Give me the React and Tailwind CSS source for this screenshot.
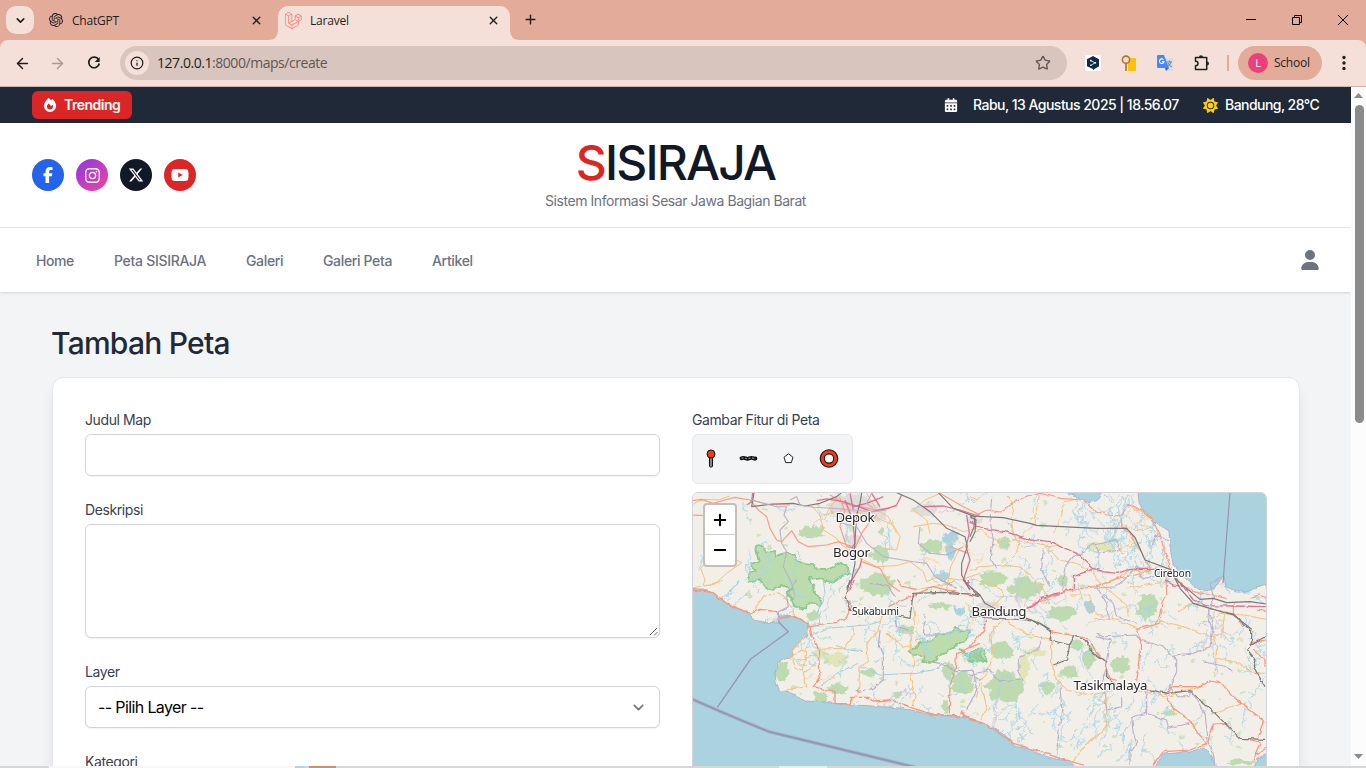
import React from "react";
import { FaFacebookF, FaInstagram, FaXTwitter, FaYoutube, FaFire, FaCalendarDays, FaSun, FaUser, FaLaravel } from "react-icons/fa6";
import { SiOpenai } from "react-icons/si";
import { ArrowLeft, ArrowRight, ChevronDown, X, Plus, Star, Info } from "lucide-react";

function TabStrip() {
  return (
    <div className="flex h-10 shrink-0 bg-[#e3ab9a] text-[12px] text-[#1f1f1f]">
      <div className="ml-1.5 mt-1.5 flex size-7 items-center justify-center rounded-[10px] bg-[#f5e0d9]">
        <ChevronDown size={13} strokeWidth={3} />
      </div>
      <div className="ml-[15px] flex h-10 w-[229px] items-center">
        <SiOpenai size={14} />
        <span className="ml-[9px] mt-px tracking-[-0.2px]">ChatGPT</span>
        <X size={13} strokeWidth={2.6} className="ml-auto mr-[15px]" />
      </div>
      <svg className="mt-[30px] h-2.5 w-2.5 -ml-[10px]" viewBox="0 0 10 10"><path d="M10 0V10H0Q10 10 10 0" fill="#f5e0d9" /></svg>
      <div className="mt-1.5 flex h-[34px] w-[232px] items-center rounded-t-[10px] bg-[#f5e0d9] pb-1.5">
        <FaLaravel size={17} color="#ff5a4d" className="ml-[7px]" />
        <span className="ml-[8px] mt-px tracking-[-0.2px]">Laravel</span>
        <X size={13} strokeWidth={2.6} className="ml-auto mr-[10px]" />
      </div>
      <svg className="mt-[30px] h-2.5 w-2.5" viewBox="0 0 10 10"><path d="M0 0V10H10Q0 10 0 0" fill="#f5e0d9" /></svg>
      <Plus size={15} strokeWidth={2.2} className="ml-[3px] mt-[12px]" />
      <div className="ml-auto flex items-center text-black">
        <svg width="110" height="14" viewBox="0 0 110 14" fill="none" stroke="currentColor" className="mr-[14px]">
          <path d="M4 6.5h10M50.5 4.5h7v7h-7zM52.500 4.500v-2h7v7h-2" />
          <path d="M96 2l10 10M106 2L96 12" />
        </svg>
      </div>
    </div>
  );
}

function Toolbar() {
  return (
    <div className="shrink-0 bg-[#e3ab9a]">
      <div className="flex h-[46px] items-center rounded-t-[8px] bg-[#f5e0d9] text-[#1f1f1f]">
        <ArrowLeft size={17} strokeWidth={2.1} className="ml-[14px]" />
        <ArrowRight size={17} strokeWidth={2.1} className="ml-[18px] text-[#a79a96]" />
        <svg width="16" height="16" viewBox="0 0 16 16" className="ml-[20px]" fill="none" stroke="currentColor" strokeWidth="1.7">
          <path d="M12.600 4.600A5.300 5.300 0 1 0 13.300 8.500" />
          <path d="M13.700 2v5h-5z" fill="currentColor" stroke="none" />
        </svg>
        <div className="ml-[18px] flex h-[34px] w-[947px] items-center rounded-full bg-[#d8c5be]">
          <div className="ml-[5px] flex size-6 items-center justify-center rounded-full bg-[#f5e0d9]"><Info size={14} strokeWidth={2.1} /></div>
          <span className="mb-px ml-[8px] text-[14px] tracking-[-0.45px] text-[#5e5653]"><span className="text-[#1f1f1f]">127.0.0.1</span>:8000/maps/create</span>
          <Star size={16} strokeWidth={2} className="ml-auto mr-4 text-[#5e5653]" />
        </div>
        <svg width="16" height="16" viewBox="0 0 16 16" className="ml-[18px]">
          <rect width="16" height="16" rx="1" fill="#fff" />
          <path d="M8 1l6 3.300v7L9.500 14 8 15.300V14L2 11.300v-7z" fill="#0f2b46" />
          <path d="M5.500 5.500l4.500 2.300-4 2.500" stroke="#fff" fill="none" strokeWidth=".8" /><circle cx="10.300" cy="7.800" r=".9" fill="#fff" /><circle cx="5.800" cy="5.600" r=".9" fill="#fff" /><circle cx="5.800" cy="10.300" r=".8" fill="#fff" />
        </svg>
        <svg width="16" height="17" viewBox="0 0 16 17" className="ml-[20px]">
          <rect x="7" y="3" width="8" height="13" rx="1" fill="#fbc10d" />
          <path d="M5 8v8" stroke="#a96b16" strokeWidth="1.500" /><circle cx="5" cy="4.700" r="3.600" fill="#f5e0d9" stroke="#b87316" strokeWidth="1.600" />
        </svg>
        <svg width="17" height="16" viewBox="0 0 17 16" className="ml-[20px]">
          <path d="M8 3h7q1 0 1 1v11q0 1-1 1H9z" fill="#d9dde2" />
          <path d="M1 0h6l5 13H1q-1 0-1-1V1q0-1 1-1z" fill="#4587f4" /><path d="M8 13h4l-3 3z" fill="#3367d6" />
          <path d="M6.400 4.600A2.300 2.300 0 1 0 7 6.600H4.800" stroke="#fff" strokeWidth="1.100" fill="none" />
          <path d="M10 7h5M12.500 5.500V7M14 7q-1 4-4 5M11 8q1 3 4 4" stroke="#6f8495" fill="none" />
        </svg>
        <svg width="18" height="18" viewBox="0 0 18 18" className="ml-[19px]" fill="none" stroke="currentColor" strokeWidth="1.500">
          <path d="M2.500 3.500h11.200v11.900H2.500v-3.700q2.500 0 2.500-2.200T2.500 7.300z" strokeLinejoin="round" />
          <path d="M6 3.200a2 2 0 0 1 4 0zM14 7.500a2 2 0 0 1 0 4z" fill="currentColor" stroke="none" />
        </svg>
        <div className="ml-[16px] h-4 w-0.5 bg-[#e3ab9a]" />
        <div className="ml-[9px] flex h-[34px] w-[84px] items-center rounded-full bg-[#e3ab9a]">
          <div className="ml-2.5 flex size-5 items-center justify-center rounded-full bg-[#ec407a] text-[11px] text-white">L</div>
          <span className="ml-[6px] text-[12px] tracking-[-0.25px]">School</span>
        </div>
        <svg width="4" height="16" viewBox="0 0 4 16" className="ml-[20px]" fill="currentColor"><circle cx="2" cy="2.500" r="1.700" /><circle cx="2" cy="8" r="1.700" /><circle cx="2" cy="13.500" r="1.700" /></svg>
      </div>
      <div className="h-px bg-[#cbb4ac]" />
    </div>
  );
}

function SiteHeader() {
  return (
    <>
      <div className="flex h-9 items-center bg-[#1f2937] pl-8 pr-8 text-sm font-medium text-white">
        <div className="flex h-7 w-[100px] items-center rounded-md bg-[#dc2626] pl-[11px] font-semibold">
          <FaFire size={14} /><span className="ml-[7px] tracking-[-0.5px]">Trending</span>
        </div>
        <FaCalendarDays size={14} className="ml-auto" />
        <span className="ml-[15px] w-[206px] whitespace-nowrap tracking-[-0.52px]">Rabu, 13 Agustus 2025 | 18.56.07</span>
        <FaSun size={15} className="ml-6 text-[#facc15]" />
        <span className="ml-[7px] w-[94px] whitespace-nowrap tracking-[-0.55px]">Bandung, 28°C</span>
      </div>
      <header className="grid h-[105px] grid-cols-[1fr_auto_1fr] items-center border-b border-[#e5e7eb] bg-white px-8">
        <div className="flex gap-3 text-white">
          <div className="flex size-8 items-center justify-center rounded-full bg-[#2563eb]"><FaFacebookF size={16} /></div>
          <div className="flex size-8 items-center justify-center rounded-full bg-[linear-gradient(135deg,#9333ea,#ec4899)]"><FaInstagram size={17} /></div>
          <div className="flex size-8 items-center justify-center rounded-full bg-[#111827]"><FaXTwitter size={16} /></div>
          <div className="flex size-8 items-center justify-center rounded-full bg-[#dc2626]"><FaYoutube size={18} /></div>
        </div>
        <div className="flex flex-col items-center">
          <div className="h-12 text-[48px]/[48px] font-medium tracking-[-1.8px] text-[#111827]"><span className="text-[#dc2626]">S</span>ISIRAJA</div>
          <div className="mt-1 text-sm tracking-[-0.44px] text-[#6b7280]">Sistem Informasi Sesar Jawa Bagian Barat</div>
        </div>
      </header>
      <nav className="relative flex h-16 items-center gap-10 bg-white pl-9 pr-[31px] pt-px text-sm font-medium text-[#6b7280] shadow-sm">
        <span className="w-[38px] tracking-[-0.4px]">Home</span>
        <span className="w-[92px] whitespace-nowrap tracking-[-0.3px]">Peta SISIRAJA</span>
        <span className="w-[37px] tracking-[-0.35px]">Galeri</span>
        <span className="w-[69px] whitespace-nowrap tracking-[-0.35px]">Galeri Peta</span>
        <span className="tracking-[-0.35px]">Artikel</span>
        <FaUser size={20} className="mb-0.5 ml-auto" />
      </nav>
    </>
  );
}

function Label({ children }) {
  return <div className="mb-1 h-5 text-sm/5 tracking-[-0.4px] text-[#374151]">{children}</div>;
}

function DrawTools() {
  return (
    <div className="flex h-[50px] w-[161px] items-center rounded-md border border-[#e5e7eb] bg-[#f3f4f6]">
      <svg width="159" height="48" viewBox="693 435 159 48">
        <rect x="709.500" y="456" width="3" height="11" rx="1" fill="#888" stroke="#111" />
        <circle cx="711" cy="454" r="4" fill="#f23a14" stroke="#111" strokeWidth="1" />
        <path d="M741.500 458.300q2-1 4 0t4 0 4 0 2 0" stroke="#111" strokeWidth="3.800" fill="none" strokeLinecap="round" />
        <path d="M741.500 458.300q2-1 4 0t4 0 4 0 2 0" stroke="#8a8a8a" strokeWidth="1.200" fill="none" strokeDasharray="2 1.500" />
        <path d="M788.500 453.700l4.500 3.600-1.700 5.300h-5.600l-1.700-5.300z" fill="#fff" stroke="#222" />
        <circle cx="829" cy="458.500" r="6.700" stroke="#151515" strokeWidth="5.200" fill="#fff" />
        <circle cx="829" cy="458.500" r="6.700" stroke="#f23a14" strokeWidth="3" fill="none" />
      </svg>
    </div>
  );
}

function makeRandom(seed) {
  let s = seed;
  return () => ((s = (s * 16807) % 2147483647) / 2147483647);
}

function wander(rnd, x, y, angle, steps, len) {
  let d = `M${x.toFixed(1)} ${y.toFixed(1)}`;
  let a = angle;
  for (let i = 0; i < steps; i++) {
    a += (rnd() - 0.5) * 1.1;
    x += Math.cos(a) * len;
    y += Math.sin(a) * len;
    d += `L${x.toFixed(1)} ${y.toFixed(1)}`;
    if (rnd() < 0.2) {
      const b = a + (rnd() < 0.5 ? 1 : -1);
      d += `l${(Math.cos(b) * len * 1.6).toFixed(1)} ${(Math.sin(b) * len * 1.6).toFixed(1)}M${x.toFixed(1)} ${y.toFixed(1)}`;
    }
  }
  return d;
}

const rnd = makeRandom(4721);
const streams = Array.from({ length: 230 }, () =>
  wander(rnd, 692 + rnd() * 575, 492 + rnd() * 274, Math.PI * (0.25 + rnd() * 0.5) * (rnd() < 0.5 ? -1 : 1), 4 + Math.floor(rnd() * 8), 3)
).join("");
const deltaStreams = Array.from({ length: 80 }, () =>
  wander(rnd, 1068 + rnd() * 100, 492 + rnd() * 75, 1.2 + rnd(), 3 + Math.floor(rnd() * 5), 2.6)
).join("");
const southStreams = Array.from({ length: 42 }, () =>
  wander(rnd, 985 + rnd() * 150, 695 + rnd() * 50, 1.5 + rnd() * 0.8, 4 + Math.floor(rnd() * 5), 3)
).join("");
const minorRoads = Array.from({ length: 14 }, () =>
  wander(rnd, 692 + rnd() * 575, 492 + rnd() * 220, rnd() * 6.3, 6 + Math.floor(rnd() * 9), 4)
).join("");
const minorBorders = Array.from({ length: 12 }, () =>
  wander(rnd, 720 + rnd() * 530, 500 + rnd() * 240, rnd() * 6.3, 7 + Math.floor(rnd() * 9), 3.5)
).join("");

const woods = [
  [877, 585, 18, 13], [932, 547, 11, 8], [812, 532, 14, 7], [993, 579, 16, 9], [1025, 588, 17, 12], [880, 554, 10, 9],
  [1147, 607, 11, 14], [1063, 581, 6, 6], [1061, 613, 16, 8], [782, 671, 7, 12], [1004, 686, 19, 18], [1002, 650, 12, 9],
  [1120, 665, 10, 9], [1077, 645, 7, 6], [1089, 658, 7, 13], [1070, 673, 10, 7], [1048, 687, 7, 8], [963, 683, 12, 13],
  [948, 670, 8, 9], [838, 690, 11, 7], [821, 697, 9, 6], [1169, 713, 8, 3], [940, 606, 11, 4],
  [812, 616, 6, 5], [1241, 762, 14, 3], [869, 672, 8, 4], [905, 630, 9, 5], [945, 707, 4, 8], [1004, 542, 7, 7], [881, 531, 4, 4], [896, 695, 6, 4],
];
function blob([cx, cy, rx, ry]) {
  let d = "";
  for (let i = 0; i < 26; i++) {
    const a = (i / 26) * Math.PI * 2;
    const k = 0.7 + rnd() * 0.42;
    d += `${i ? "L" : "M"}${(cx + Math.cos(a) * rx * k).toFixed(1)} ${(cy + Math.sin(a) * ry * k).toFixed(1)}`;
  }
  return d + "Z";
}
const woodPath = woods.map(blob).join("");
const scatterPath = Array.from({ length: 170 }, () => blob([700 + rnd() * 560, 500 + rnd() * 250, 1 + rnd() * 2.5, 1 + rnd() * 1.6])).join("");
const scrubPath = [[836, 659, 15, 7], [1024, 668, 6, 14], [1102, 546, 14, 6], [1035, 652, 14, 5], [820, 654, 8, 4], [1152, 600, 6, 4]].map(blob).join("");
const urbanPath = [[850, 503, 24, 11], [870, 513, 18, 10], [852, 540, 9, 8], [925, 510, 14, 7], [990, 608, 17, 7], [1170, 574, 7, 5], [975, 520, 9, 4], [1112, 687, 9, 4]].map(blob).join("");

const NW = "translate(680 400) scale(.33333)";
const NE = "translate(970 480) scale(.33333)";
const SW = "translate(680 580) scale(.33333)";
const SE = "translate(970 610) scale(.33333)";
const WEST = "translate(692 490) scale(.33333)";

function Places() {
  return (
    <g fontFamily="Noto Sans" fill="#262626" stroke="#fff" strokeOpacity=".85" strokeWidth="2.400" paintOrder="stroke" textAnchor="middle" strokeLinejoin="round">
      <text x="855" y="522" fontSize="13.300" textLength="39">Depok</text>
      <text x="851.500" y="557" fontSize="13.300" textLength="37">Bogor</text>
      <text x="875.500" y="615" fontSize="10.700" textLength="47">Sukabumi</text>
      <text x="999" y="616" fontSize="13.300" textLength="55">Bandung</text>
      <text x="1172.500" y="577" fontSize="10.300" textLength="37">Cirebon</text>
      <text x="1110.500" y="690" fontSize="13.300" textLength="74">Tasikmalaya</text>
    </g>
  );
}

function MapView() {
  return (
    <div className="relative h-[400px] overflow-hidden rounded-md border border-[#d1d5db]">
      <svg width="573" height="275" viewBox="693 493 573 275" fill="none" strokeLinejoin="round">
        <defs>
          <filter id="wobble" filterUnits="userSpaceOnUse" x="680" y="480" width="600" height="300" colorInterpolationFilters="sRGB">
            <feTurbulence type="fractalNoise" baseFrequency=".11" numOctaves="3" seed="8" />
            <feDisplacementMap in="SourceGraphic" scale="7" xChannelSelector="R" yChannelSelector="G" />
          </filter>
          <filter id="wobbleSoft" filterUnits="userSpaceOnUse" x="680" y="480" width="600" height="300" colorInterpolationFilters="sRGB">
            <feTurbulence type="fractalNoise" baseFrequency=".14" numOctaves="2" seed="3" />
            <feDisplacementMap in="SourceGraphic" scale="4" xChannelSelector="R" yChannelSelector="G" />
          </filter>
        </defs>
        <rect x="692" y="492" width="575" height="276" fill="#f2efe9" />
        <g filter="url(#wobble)">
          <path d={urbanPath} fill="#dfdcd9" />
          <path d={scrubPath} fill="#e1e5b8" />
          <path d={scatterPath} fill="#cfe3bd" />
          <path d={woodPath} fill="#bedab0" />
          <g fill="#bcdcae" stroke="#8bc78f" strokeWidth="5">
            <path transform={WEST} d="M190 170L205 168 220 180 248 183 250 200 275 190 305 192 310 210 338 222 365 225 375 238 400 240 430 222 465 225 468 250 440 262 425 280 400 272 380 262 350 268 365 290 370 315 388 325 385 345 350 340 340 355 310 352 300 330 285 315 295 298 270 285 240 300 215 285 205 270 170 278 165 255 190 240 172 225 200 212Z" />
            <path transform={WEST} d="M655 485L690 455 720 450 740 430 775 430 790 410 800 425 832 420 830 445 810 455 775 475 760 490 740 495 720 515 690 520 695 495 665 495ZM795 480L830 490 880 480 880 510 840 505Z" />
            <path transform={SE} d="M0 120L38 118 28 135 42 150 20 160 0 155Z" fill="#9ccf9c" />
          </g>
          <g fill="#aad3df">
            <path d="M942 537l8-5 8 3 2 5-7 3 3 9-4 8-5-2-1-14-5-2zM935 575l8-4 8 4-5 7zM968 609l5 2-3 6zM1083 603l9-3 3 11-7 3zM1004 543l5 2-4 6zM953 606l12 2-2 8-8-3z" />
          </g>
          <g stroke="#a9d4e4" strokeWidth=".85"><path d={streams} /><path d={deltaStreams} /><path d={southStreams} /></g>
          <path d={minorRoads} stroke="#f8d2a0" strokeWidth=".8" />
          <path d={minorBorders} stroke="#cbc0d4" strokeWidth=".7" />
        </g>
        <g fill="#aad3df" stroke="#9da5c0" strokeWidth=".7" filter="url(#wobbleSoft)">
          <path d="M680 589L704 590 713 593 727 604 740 609 751 615 754 620 763 622 778 623 781 616 795 617 804 621 808 626 808 635 801 641 795 645 792 651 791 658 783 659 778 662 777 668 775 673 776 682 780 691 787 691 795 695 805 701 824 702 840 704 873 706 900 708 915 711 932 715 949 716 963 717 976 722 985 724 999 731 1011 740 1014 746 1028 749 1042 755 1055 759 1070 761 1085 779H680Z" />
          <path d="M1137 480L1139 503 1146 515 1155 522 1169 531 1170 547 1173 565 1184 577 1195 587 1204 591 1214 589 1219 581 1224 577 1226 587 1236 592 1247 592 1257 587 1276 581V480Z" />
          <path d="M1063 490L1078 498 1090 503 1099 499 1109 480Z" />
          <path d="M1148 779L1163 754 1190 752 1204 747 1212 755 1218 779ZM1252 779L1257 758 1277 751V779Z" />
        </g>

        <g transform={NW} filter="url(#wobbleNW)">
          <g stroke="#f5c27a" strokeWidth="3">
            <path d="M36 315Q55 300 75 298L115 300 150 288M70 555L75 540 62 505 90 470 115 475 150 470 185 488 140 520 105 552 70 558M395 318L420 345 430 390 470 415 485 435 530 470 590 500 650 497 690 485M430 345Q490 325 540 338T640 375L660 410 650 450 610 445M560 280L590 330 625 350 650 400M785 278L735 300 700 330 740 360 750 400M700 380L760 370 800 375 850 395 890 385M690 485L730 515 740 545 775 530 840 540 900 520M800 570L812 500 840 445M480 290L455 315 440 340" />
          </g>
          <g stroke="#fa9d85" strokeWidth="3.600">
            <path d="M36 302L65 298 100 310 135 300 165 292 210 300 235 330 260 350 270 385 290 420 305 425 335 392 355 425 385 440 440 435 475 425 515 440M220 302L260 312 330 315M480 295L495 335 485 350 480 380 500 440 525 445M525 445L545 400 570 365 590 345M545 485L600 505 625 550 660 575M450 285L490 310 590 330 650 318M36 345L80 347M780 280L850 320 900 345M810 440L865 460" />
          </g>
          <g stroke="#df708d" strokeWidth="3.800">
            <path d="M495 300L510 340 520 380 525 430 515 445M410 302L440 297 490 305 535 320 575 335 625 325 650 315 665 285M520 320L560 310 610 290M730 320L790 318 840 330 900 350M860 345L868 400 858 440 870 480 850 540 870 570M545 475L540 500 510 550M218 278L215 305 200 315M510 280L520 330M575 280L600 320" />
          </g>
          <g stroke="#807a7b" strokeWidth="3.500"><path d="M222 278L215 320 280 312 340 310 375 318 420 310 470 290 485 278M545 278L540 310 530 345 523 450 525 490 515 540 500 565M650 278L700 300 750 335 800 385 855 410 862 440 845 490 845 525 870 570M775 278L820 325 885 350 882 380 870 410" /></g>
          <g stroke="#b9afca" strokeWidth="3.200"><path d="M215 300L290 320 320 320 312 345 325 365 300 390 305 430 320 455 310 500 335 550 345 590M330 300L350 290 360 315 400 322 455 325 580 335 620 330M575 280L560 310 580 325M720 380L715 430 750 460 800 465 850 440M470 365L530 380 560 430 610 470 700 485 740 490 765 530 800 550" /></g>
        </g>

        <g filter="url(#wobbleSoft)">
          <g transform={NE} stroke="#f5c27a" strokeWidth="3">
            <path d="M0 50L20 60 50 40M115 48L130 90 125 130 135 180 80 185 30 150 0 160M205 45L195 130 150 175 140 220 105 255 30 260 0 272M135 180L235 200 270 195M105 255L155 262 215 320 230 345 240 375M230 205L270 240 320 250 360 270 390 310 440 350 470 375 475 410M320 58L280 65 275 110 250 160M470 70L500 90 550 110M485 140L500 155 550 140M300 345L360 345 360 390 400 410M470 325L530 315 585 305M400 310L440 298 480 270 540 275M620 395L665 370 700 375M700 430L750 400 820 405 888 418M0 395L60 385 105 345 70 310 0 300" />
          </g>
          <g transform={NE} stroke="#fa9d85" strokeWidth="3.500">
            <path d="M0 115L50 90 90 96 140 60 210 40 270 55 340 60 370 90 410 105 455 108 475 70 530 100 550 125 570 165 585 220 605 270M455 108L455 140 480 155 495 190 525 235 545 275M370 320L405 310 440 295 495 285 545 270M170 385L240 350 310 330 370 320M588 290L590 340 575 370 570 430 520 445M605 280L640 318 670 335 720 345 770 355M790 370L790 400 820 440M840 355L865 345 888 352M860 390L888 395" />
          </g>
          <path transform={NE} d="M0 125L40 145 105 155 170 175 240 185 320 220 370 265 400 275 440 280 480 268 560 268M370 265L310 290 310 325 260 340 215 355 200 375 170 385M585 300L610 315 640 320 670 360 710 377 790 378 888 380M50 420L40 450" stroke="#e0708e" strokeWidth="3.800" />
          <g transform={NE} stroke="#b9afca" strokeWidth="3.200"><path d="M65 50L60 120 70 180 60 235 80 265M370 188L345 215 310 230 285 260 275 330M370 188L385 220 450 210 440 180 370 195M220 205L215 270 240 320M380 320L410 370 415 420M550 200L555 165 595 180M500 260L520 300 585 270M755 290L720 310 730 350 715 420 730 448M500 260L440 320 370 325M400 345L430 370 440 410 500 430" /></g>
        </g>
        <g transform={NE} stroke="#7b7677" strokeWidth="3.500"><path d="M0 108L100 113 180 130 200 136 380 145 470 145 495 172 525 240 600 268 625 305 690 358 730 355 770 368 840 365 888 372M600 268L630 325 670 370 720 385 790 405 845 448M0 320L30 345 45 370 100 400 170 415 210 430 240 448M0 110L18 120 15 155 0 185" /></g>
        <path d="M1230 492L1223 583" stroke="#9a93b0" strokeWidth="1.200" />

        <g filter="url(#wobbleSoft)">
          <g transform={SW} stroke="#f5c27a" strokeWidth="3.200">
            <path d="M36 28L85 15 130 0M215 100L250 50 295 38 320 60 340 90 340 112M383 155L335 215 345 265 370 270 380 215 365 210 325 235M350 240L375 235 410 225M410 208L490 205 520 165 515 140M510 365L535 340 540 260 565 245 560 190 595 150 605 110 655 100M615 160L650 180 665 205 690 200 705 110 700 80M690 200L705 250 690 290 705 350 700 380M300 332L380 320 370 280 410 250M700 30L820 10 825 0M620 160L640 175M890 350L900 310" />
          </g>
          <g transform={SW} stroke="#fa937a" strokeWidth="3.800">
            <path d="M36 30L100 38 140 70 213 100 240 88 290 95 300 115 345 110 380 130 390 140 395 165 415 208 420 290 400 320 465 335 465 370 510 372 515 352 570 352 575 363 635 360 700 385 760 403 840 408 845 390 855 410 900 430M390 140L470 130 500 110 515 80 495 50M650 0L665 18 710 28M625 80L670 60 760 20 840 40 900 48M900 190L830 220 825 270 810 320 808 400" />
          </g>
          <path transform={SW} d="M510 0L495 50 510 90 540 100 640 105 690 115 700 40 790 37 870 42 900 50M850 0L900 50" stroke="#807a7b" strokeWidth="3.600" />
          <path transform={SW} d="M520 0L495 50M868 0V20" stroke="#df708d" strokeWidth="3.600" />
          <g transform={SW} stroke="#b4abca" strokeWidth="3.300"><path d="M350 0L320 50 325 80 295 95 295 125M735 105L730 165 770 165M600 150L595 200 610 225 610 300 580 325 530 335M780 0L830 25M865 280L900 300M645 120L650 140 685 150M720 240L780 250 830 275 880 270 890 330 860 390M570 10L620 15 645 50" /></g>
          <g transform={SW} stroke="#9fcfe0" strokeWidth="3"><path d="M395 165L440 145 560 135 600 125M420 140L415 90 435 40 430 0M545 260L600 285 690 280 760 270 800 245M420 320L470 280 535 250M465 195L510 210 550 215M705 180L770 165 840 150 880 150M120 60L170 15 180 0M160 75L210 30" /></g>

          <g transform={SE} stroke="#f5c27a" strokeWidth="3.200"><path d="M100 30L60 65 70 140 50 190 30 210 50 290 30 330M245 80L245 160 260 210 290 240 360 255 440 240 530 245M410 260L410 350 380 380 330 420 310 455M530 245L600 260 620 245 700 230M560 30L640 50 730 80 755 70 765 10M730 80L740 110 735 200M740 145L810 160 850 190 885 190M720 315L780 290 830 275M375 25L440 30 510 60M110 35L180 75 240 90" /></g>
          <g transform={SE} stroke="#fa937a" strokeWidth="3.700"><path d="M0 110L40 60 50 30M240 65L300 75 350 85 370 110 380 130 405 155 415 200 440 215M500 60L515 50 560 40 570 0M500 60L512 90 510 150 500 210M595 250L605 230 690 230 720 210 750 215 790 260 840 300 880 330 865 385M590 265L610 295 660 330 685 370 710 400 660 420 580 425 540 478M715 400L730 345 775 342M0 325L50 345 130 400 210 425 270 445 340 465M840 100L888 90M850 120L885 150 885 170M840 390L870 395 850 450M850 440L888 415" /></g>
          <g transform={SE} stroke="#807877" strokeWidth="3.600"><path d="M0 20L170 30 210 40 245 65 240 90 300 105 310 78 345 90 370 130 405 155 410 200 435 225 530 238 595 250 660 242 690 270 730 305 810 385 888 388M300 100L290 150 250 165M740 0L790 12 845 65 845 105 830 120 855 150 850 170 885 230M845 105L888 80" /></g>
          <g transform={SE} stroke="#b9afca" strokeWidth="3.200"><path d="M380 80L420 90 410 150 400 200 405 270 410 300 455 290 455 260M510 90L580 110 620 150 620 185 600 230M715 0L730 40 720 110 670 130 610 135 610 150M665 240L680 270 705 310 715 400 730 430 735 468M215 80L200 120 150 140 145 180 160 210 90 215 60 180 0 195M270 225L275 300 260 420M485 320L530 310 590 330 595 355 655 340M485 320L490 370 500 400 480 430 480 468M375 70L400 80 500 75 510 90M600 230L620 260 660 260 660 240M530 240L530 315M700 155L770 170 790 190" /></g>
        </g>
        <path transform={SW} d="M295 125L325 155 212 237 112 382" stroke="#9a94b7" strokeWidth="4" />
        <path transform={SW} d="M36 357Q160 412 270 456L690 558 760 575" stroke="#9892b1" strokeWidth="7.500" />
        <Places />
      </svg>
      <div className="absolute left-[10px] top-[10px] flex h-[64px] w-[34px] flex-col rounded-[4px] border-2 border-[#c3c0b9] bg-white text-black">
        <div className="flex h-[30px] items-center justify-center border-b border-[#ccc]"><Plus size={18} strokeWidth={2.8} /></div>
        <div className="flex h-[30px] items-center justify-center"><div className="h-0.5 w-3 bg-black" /></div>
      </div>
    </div>
  );
}

function MapForm() {
  const field = "rounded-md border border-[#d1d5db] bg-white shadow-xs";
  return (
    <main className="px-[52px] pt-[33px]">
      <h1 className="-ml-px h-9 text-[30px]/9 font-medium tracking-[-0.75px] text-[#1f2937]">Tambah Peta</h1>
      <div className="mt-4 grid h-[600px] w-[1248px] grid-cols-2 gap-8 rounded-xl border border-[#e5e7eb] bg-white p-8 shadow-lg">
        <div>
          <Label>Judul Map</Label>
          <div className={`h-[42px] ${field}`} />
          <div className="h-6" />
          <Label>Deskripsi</Label>
          <div className={`flex h-[114px] items-end justify-end ${field}`}>
            <svg width="10" height="10" viewBox="0 0 10 10" stroke="#555" strokeWidth=".9"><path d="M1 8L8 1M5 8.500L8.500 5" /></svg>
          </div>
          <div className="h-6" />
          <Label>Layer</Label>
          <div className={`flex h-[42px] items-center justify-between pl-3 pr-3 text-base tracking-[-0.62px] text-black ${field}`}>
            <span>-- Pilih Layer --</span><ChevronDown size={17} strokeWidth={2.2} className="text-[#6b7280]" />
          </div>
          <div className="h-6" />
          <Label>Kategori</Label>
        </div>
        <div>
          <Label>Gambar Fitur di Peta</Label>
          <DrawTools />
          <div className="h-2" />
          <MapView />
        </div>
      </div>
    </main>
  );
}

export default function App() {
  return (
    <div className="flex h-[768px] w-[1366px] flex-col overflow-hidden font-['Open_Sans',sans-serif]">
      <TabStrip />
      <Toolbar />
      <div className="flex h-[679px] shrink-0">
        <div className="h-full w-[1351px] overflow-hidden bg-[#f3f4f6] font-['Inter',sans-serif]">
          <SiteHeader />
          <MapForm />
        </div>
        <div className="flex h-full w-[15px] flex-col items-center bg-[#fcfcfc]">
          <svg width="9" height="5" viewBox="0 0 9 5" className="mt-1.5"><path d="M0 5L4.500 0 9 5z" fill="#8b8b8b" /></svg>
          <div className="ml-px mt-[7px] h-[318px] w-[9px] rounded-full bg-[#8b8b8b]" />
          <svg width="9" height="5" viewBox="0 0 9 5" className="mb-[7px] mt-auto"><path d="M0 0h9L4.500 5z" fill="#8b8b8b" /></svg>
        </div>
      </div>
      <div className="flex h-0.5 shrink-0 bg-[#d6d6d6]">
        <div className="ml-[49px] h-full w-[246px] bg-[#f7f7f7]" />
        <div className="h-full w-[10px] bg-[#b8d2e5]" />
        <div className="ml-[4px] h-full w-[27px] bg-[#cf8d68]" />
        <div className="ml-[443px] h-full w-[48px] bg-[#ededed]" />
      </div>
    </div>
  );
}
